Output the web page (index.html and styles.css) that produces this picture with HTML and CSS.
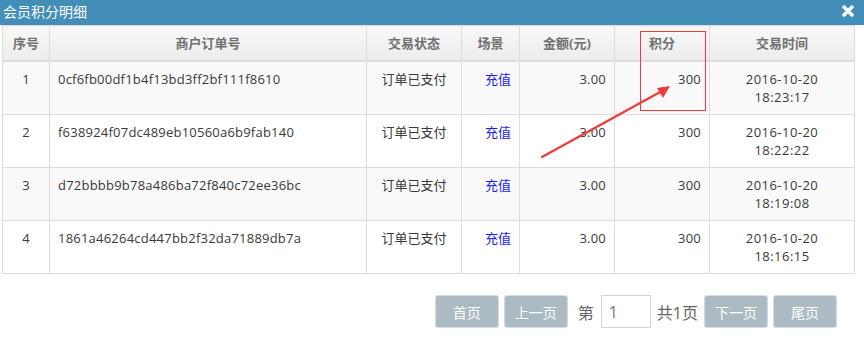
FILE: index.html
```html
<!DOCTYPE html>
<html lang="zh">
<head>
<meta charset="utf-8">
<title>会员积分明细</title>
<link rel="stylesheet" href="styles.css">
</head>
<body>
<div class="dialog">
  <div class="titlebar">
    <span class="title">会员积分明细</span>
    <svg class="close" width="12" height="12" viewBox="0 0 12 12"><path d="M2 2 L10 10 M10 2 L2 10" stroke="#fff" stroke-width="3.4" stroke-linecap="round"/></svg>
  </div>
  <div class="content">
    <table class="grid">
      <colgroup>
        <col class="c-no"><col class="c-order"><col class="c-state"><col class="c-scene"><col class="c-amt"><col class="c-pts"><col class="c-time">
      </colgroup>
      <thead>
        <tr><th>序号</th><th>商户订单号</th><th>交易状态</th><th>场景</th><th>金额(元)</th><th>积分</th><th>交易时间</th></tr>
      </thead>
      <tbody>
        <tr class="odd"><td class="ctr">1</td><td class="num">0cf6fb00df1b4f13bd3ff2bf111f8610</td><td class="ctr">订单已支付</td><td class="rt link">充值</td><td class="rt num">3.00</td><td class="rt num">300</td><td class="ctr time">2016-10-20<br>18:23:17</td></tr>
        <tr><td class="ctr">2</td><td class="num">f638924f07dc489eb10560a6b9fab140</td><td class="ctr">订单已支付</td><td class="rt link">充值</td><td class="rt num">3.00</td><td class="rt num">300</td><td class="ctr time">2016-10-20<br>18:22:22</td></tr>
        <tr class="odd"><td class="ctr">3</td><td class="num">d72bbbb9b78a486ba72f840c72ee36bc</td><td class="ctr">订单已支付</td><td class="rt link">充值</td><td class="rt num">3.00</td><td class="rt num">300</td><td class="ctr time">2016-10-20<br>18:19:08</td></tr>
        <tr><td class="ctr">4</td><td class="num">1861a46264cd447bb2f32da71889db7a</td><td class="ctr">订单已支付</td><td class="rt link">充值</td><td class="rt num">3.00</td><td class="rt num">300</td><td class="ctr time">2016-10-20<br>18:16:15</td></tr>
      </tbody>
    </table>
    <div class="pager">
      <button class="pbtn">首页</button>
      <button class="pbtn">上一页</button>
      <span class="plabel first">第</span>
      <input class="pinput" type="text" value="1">
      <span class="plabel">共1页</span>
      <button class="pbtn">下一页</button>
      <button class="pbtn">尾页</button>
    </div>
  </div>
  <div class="highlight"></div>
  <svg class="arrow" width="864" height="337" viewBox="0 0 864 337">
    <line x1="542" y1="157" x2="662" y2="91" stroke="#f03c3c" stroke-width="2.4" stroke-linecap="round"/>
    <polygon points="670,86 657,88 663,98" fill="#f03c3c"/>
  </svg>
</div>
</body>
</html>
```

FILE: styles.css
```css
html, body {
  margin: 0;
  padding: 0;
  background: #fff;
}
body {
  font-family: "Open Sans", "Noto Sans CJK SC", sans-serif;
  font-size: 13px;
  color: #393939;
  width: 864px;
  height: 337px;
  overflow: hidden;
}
.dialog {
  position: relative;
  width: 864px;
  height: 337px;
}
.titlebar {
  height: 25px;
  background: #438eb9;
  color: #fff;
  display: flex;
  align-items: center;
  justify-content: space-between;
  padding: 0 10px 0 3px;
}
.title {
  font-size: 14px;
  line-height: 25px;
  margin-top: -3px;
}
.close {
  margin-top: -4px;
}
.content {
  padding: 0 10px 0 2px;
}
.grid {
  border-collapse: collapse;
  table-layout: fixed;
  width: 852px;
}
.c-no { width: 47px; }
.c-order { width: 317px; }
.c-state { width: 95px; }
.c-scene { width: 58px; }
.c-amt { width: 95px; }
.c-pts { width: 95px; }
.c-time { width: 145px; }
.grid th {
  border: 1px solid #ddd;
  border-bottom: 2px solid #ddd;
  background: linear-gradient(#f8f8f8, #ececec);
  color: #707070;
  font-weight: bold;
  padding: 8px;
  line-height: 18px;
  text-align: center;
}
.grid td {
  border: 1px solid #ddd;
  padding: 8px;
  line-height: 18px;
  vertical-align: top;
  text-align: left;
}
.grid tr.odd td {
  background: #f9f9f9;
}
.grid td.ctr { text-align: center; }
.grid td.rt { text-align: right; }
.grid td.num { letter-spacing: 0.22px; }
.grid td.time { letter-spacing: 0.45px; }
.grid td.link { color: #1a1aff; }
.pager {
  display: flex;
  justify-content: flex-end;
  align-items: center;
  gap: 5px;
  margin-top: 21px;
  padding-right: 17px;
}
.pbtn {
  width: 64px;
  height: 33px;
  background: #abbac3;
  border: 1px solid #d5dde2;
  border-radius: 3px;
  color: #fff;
  font-family: "Open Sans", "Noto Sans CJK SC", sans-serif;
  font-size: 14px;
  padding: 0;
}
.plabel {
  font-size: 16px;
  color: #666;
  margin: 0 1px;
}
.plabel.first {
  margin-left: 5px;
  margin-right: 2px;
}
.pinput {
  width: 50px;
  height: 33px;
  box-sizing: border-box;
  border: 1px solid #d5d5d5;
  padding: 0 7px;
  font-family: "Open Sans", sans-serif;
  font-size: 16px;
  color: #777;
}
.highlight {
  position: absolute;
  left: 640px;
  top: 31px;
  width: 64px;
  height: 78px;
  border: 1.5px solid #ee3a3a;
}
.arrow {
  position: absolute;
  left: 0;
  top: 0;
  pointer-events: none;
}
```
